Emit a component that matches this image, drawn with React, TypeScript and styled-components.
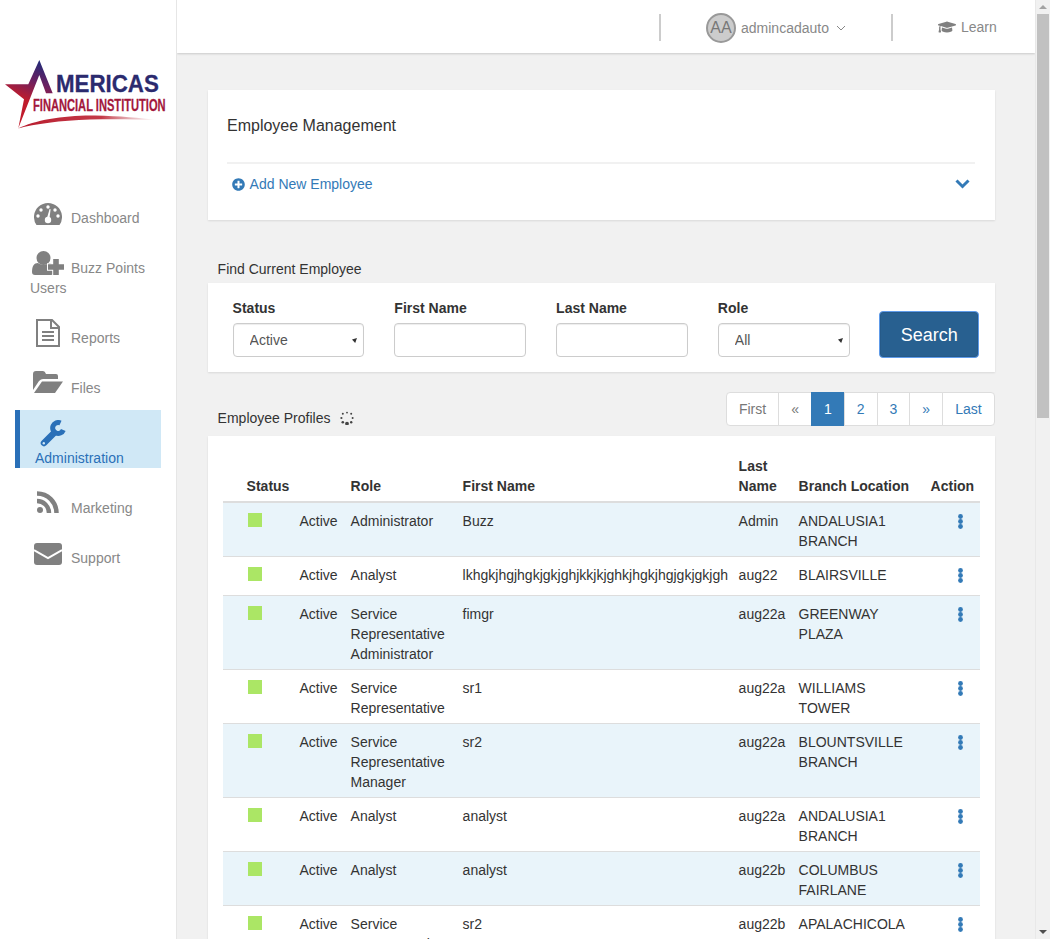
import React from 'react';
import styled, { createGlobalStyle } from 'styled-components';
import { FaGraduationCap, FaPlusCircle } from 'react-icons/fa';

const GlobalStyle = createGlobalStyle`
    html, body {
        margin: 0;
        height: 100%;
        overflow: hidden;
        background: #f1f1f1;
        color: #333;
        font-family: "Liberation Sans", Arial, sans-serif;
        font-size: 14px;
        line-height: 20px;
    }
    * { box-sizing: border-box; }
`;

const Shell = styled.div`
    display: flex;
    height: 100vh;
    overflow: hidden;
`;

const Sidebar = styled.aside`
    flex: 0 0 177px;
    background: #fff;
    border-right: 1px solid #e6e6e6;
    padding-top: 60px;
`;

const LogoBox = styled.div`
    height: 138px;
    padding-left: 5px;
`;

const Nav = styled.nav`
    width: 146px;
    margin-left: 15px;
`;

const NavItem = styled.a<{ $active?: boolean }>`
    display: block;
    padding: ${(p) => (p.$active ? '10px 0 0 15px' : '10px 0 10px 15px')};
    margin: ${(p) => (p.$active ? '-8px 0 20px' : '0 0 10px')};
    background: ${(p) => (p.$active ? '#d0e8f6' : 'transparent')};
    border-left: ${(p) => (p.$active ? '5px solid #2a70b8' : 'none')};
    color: ${(p) => (p.$active ? '#2a70b8' : '#888')};
`;

const IconSlot = styled.span<{ $left: number; $top: number; $stacked?: boolean }>`
    display: ${(p) => (p.$stacked ? 'block' : 'inline-block')};
    width: ${(p) => (p.$stacked ? 'auto' : '41px')};
    height: ${(p) => (p.$stacked ? '28px' : '20px')};
    vertical-align: top;
    & > svg {
        display: block;
        margin-left: ${(p) => p.$left}px;
        margin-top: ${(p) => p.$top}px;
    }
`;

const Main = styled.div`
    flex: 1;
    min-width: 0;
    display: flex;
    flex-direction: column;
    overflow: hidden;
`;

const Header = styled.header`
    flex: 0 0 53px;
    background: #fff;
    box-shadow: 0 1px 2px rgba(0, 0, 0, 0.16);
    display: flex;
    justify-content: flex-end;
    align-items: flex-start;
    color: #888;
`;

const HeaderDivider = styled.span`
    width: 2px;
    height: 27px;
    margin-top: 14px;
    background: #ccc;
`;

const UserBlock = styled.div`
    width: 230px;
    height: 53px;
    padding: 3px 0 0 45px;
    display: flex;
    align-items: center;
`;

const Avatar = styled.span`
    width: 30px;
    height: 30px;
    border-radius: 50%;
    background: #ccc;
    border: 2px solid #999;
    display: flex;
    align-items: center;
    justify-content: center;
    font-size: 16px;
    color: #777;
    margin-right: 5px;
`;

const CaretIcon = styled.svg`
    margin-left: 7px;
`;

const LearnBlock = styled.div`
    width: 142px;
    height: 53px;
    padding: 1px 0 0 45px;
    display: flex;
    align-items: center;
    gap: 5px;
`;

const Content = styled.main`
    flex: 1;
    padding: 37px 40px 0 31px;
`;

const Card = styled.section`
    background: #fff;
    box-shadow: 0 1px 2px rgba(0, 0, 0, 0.1);
`;

const ManageCard = styled(Card)`
    padding: 25px 20px 0 19px;
    height: 130px;
    margin-bottom: 39px;
`;

const CardTitle = styled.h2`
    margin: 0 0 25px;
    font-size: 16px;
    font-weight: 400;
    line-height: 22px;
`;

const AddRow = styled.div`
    border-top: 2px solid #f1f1f1;
    height: 42px;
    padding: 0 5px;
    display: flex;
    align-items: center;
    justify-content: space-between;
    color: #337ab7;
`;

const AddLink = styled.a`
    display: flex;
    align-items: center;
    gap: 4.6px;
`;

const SectionTitle = styled.div`
    padding-left: 9.6px;
    line-height: 20px;
`;

const SearchCard = styled(Card)`
    margin-top: 4px;
    padding: 15px 16px 15px 24.6px;
    display: flex;
    align-items: flex-start;
    gap: 30px;
`;

const Field = styled.label`
    display: block;
    flex: 0 0 131.75px;
`;

const FieldLabel = styled.div`
    font-weight: 700;
    margin-bottom: 5px;
`;

const controlStyles = `
    display: block;
    width: 100%;
    height: 34px;
    background-color: #fff;
    border: 1px solid #ccc;
    border-radius: 4px;
    box-shadow: inset 0 1px 1px rgba(0, 0, 0, 0.075);
    color: #555;
    font: 14px "Liberation Sans", Arial, sans-serif;
`;

const TextInput = styled.input`
    ${controlStyles}
    padding: 6px 12px;
`;

const selectArrow =
    "url(\"data:image/svg+xml,%3Csvg xmlns='http://www.w3.org/2000/svg' width='5' height='5'%3E%3Cpath d='M0 1.4 L5 0 L3.2 5 Z' fill='%23333'/%3E%3C/svg%3E\")";

const Select = styled.select`
    ${controlStyles}
    appearance: none;
    padding: 6px 16px;
    background-image: ${selectArrow};
    background-repeat: no-repeat;
    background-position: right 6px center;
`;

const SearchButton = styled.button`
    flex: 0 0 100px;
    height: 47px;
    margin: 13px 0 -1px -0.4px;
    padding: 2px 0 0;
    background: #286090;
    border: 1px solid #5e9bea;
    border-radius: 4px;
    box-shadow: inset 0 0 0 1px #265a88;
    color: #fff;
    font: 18px "Liberation Sans", Arial, sans-serif;
`;

const ProfilesBar = styled.div`
    display: flex;
    justify-content: space-between;
    align-items: flex-end;
    margin: 20px 0 10px;
`;

const ProfilesTitle = styled.div`
    display: flex;
    align-items: center;
    gap: 10px;
    padding-left: 9.6px;
    margin-bottom: -2px;
`;

const Pager = styled.ul`
    display: flex;
    list-style: none;
    margin: 0 0.4px 0 0;
    padding: 0;
`;

const PageLink = styled.li<{ $state?: 'active' | 'disabled' }>`
    padding: 6px 12px;
    margin-left: -1px;
    border: 1px solid ${(p) => (p.$state === 'active' ? '#337ab7' : '#ddd')};
    background: ${(p) => (p.$state === 'active' ? '#337ab7' : '#fff')};
    color: ${(p) => (p.$state === 'active' ? '#fff' : p.$state === 'disabled' ? '#777' : '#337ab7')};
    &:first-child {
        border-radius: 4px 0 0 4px;
    }
    &:last-child {
        border-radius: 0 4px 4px 0;
    }
`;

const TableCard = styled(Card)`
    padding: 20px 15px 0;
`;

const Table = styled.table`
    width: 757px;
    table-layout: fixed;
    border-collapse: separate;
    border-spacing: 0;
`;

const Th = styled.th`
    padding: 0 5.4px 5px 4.6px;
    text-align: left;
    vertical-align: bottom;
    font-weight: 700;
    border-bottom: 2px solid #ddd;
    &:first-child {
        padding-left: 23.6px;
    }
`;

const Tr = styled.tr<{ $shaded: boolean }>`
    background: ${(p) => (p.$shaded ? '#e9f4fa' : '#fff')};
`;

const Td = styled.td`
    padding: 8px 5.4px 5px 4.6px;
    height: 39px;
    vertical-align: top;
    border-bottom: 1px solid #ddd;
`;

const StatusCell = styled.div`
    display: flex;
    justify-content: space-between;
    padding: 0 3px 0 20.4px;
`;

const StatusDot = styled.span`
    width: 14px;
    height: 14px;
    margin-top: 2px;
    background: #abe665;
`;

const ActionCell = styled.div`
    display: flex;
    justify-content: center;
    padding: 3px 0 0 15px;
`;

const Track = styled.div`
    flex: 0 0 15px;
    background: #f1f1f1;
    border-left: 1px solid #e8e8e8;
    display: flex;
    flex-direction: column;
    align-items: center;
`;

const Arrow = styled.span<{ $dir: 'up' | 'down' }>`
    flex: 0 0 auto;
    margin: ${(p) => (p.$dir === 'up' ? '5px 0 5px' : 'auto 0 5px')};
    border-left: 4px solid transparent;
    border-right: 4px solid transparent;
    ${(p) => (p.$dir === 'up' ? 'border-bottom: 4px solid #a3a3a3;' : 'border-top: 4px solid #505050;')}
`;

const Thumb = styled.div`
    width: 12px;
    height: 404px;
    background: #c1c1c1;
`;

const rows = [
    ['Administrator', 'Buzz', 'Admin', 'ANDALUSIA1 BRANCH'],
    ['Analyst', 'lkhgkjhgjhgkjgkjghjkkjkjghkjhgkjhgjgkjgkjgh', 'aug22', 'BLAIRSVILLE'],
    ['Service Representative Administrator', 'fimgr', 'aug22a', 'GREENWAY PLAZA'],
    ['Service Representative', 'sr1', 'aug22a', 'WILLIAMS TOWER'],
    ['Service Representative Manager', 'sr2', 'aug22a', 'BLOUNTSVILLE BRANCH'],
    ['Analyst', 'analyst', 'aug22a', 'ANDALUSIA1 BRANCH'],
    ['Analyst', 'analyst', 'aug22b', 'COLUMBUS FAIRLANE'],
    ['Service Representative', 'sr2', 'aug22b', 'APALACHICOLA'],
];

const columnWidths = [123, 112, 276, 60, 132, 54];
const iconGrey = '#808080';
const logoFont = 'Liberation Sans, Arial, sans-serif';

function Logo() {
    return (
        <svg width="166" height="76" viewBox="0 0 166 76">
            <defs>
                <linearGradient id="starFill" gradientUnits="userSpaceOnUse" x1="36" y1="2" x2="20" y2="40">
                    <stop offset="0" stopColor="#232a78" />
                    <stop offset="0.5" stopColor="#6d2060" />
                    <stop offset="1" stopColor="#c01c2c" />
                </linearGradient>
                <linearGradient id="swooshFill" x1="0" y1="0" x2="1" y2="0">
                    <stop offset="0" stopColor="#b81c2e" />
                    <stop offset="0.6" stopColor="#c43a48" />
                    <stop offset="1" stopColor="#d08088" stopOpacity="0" />
                </linearGradient>
            </defs>
            <path
                d="M0 24.3 H23.3 L34.3 0 L47.7 33.3 H41 L34.3 15 L25.7 36.7 L13.3 68.3 L19 39.3 Z"
                fill="url(#starFill)"
            />
            <path
                d="M13 68.5 C30 60 60 55 90 55.5 C115 56 135 58 152 60 C125 59 105 59 85 59.5 C55 60.5 30 64 13 68.5 Z"
                fill="url(#swooshFill)"
            />
            <text
                transform="translate(51 32) scale(0.93 1)"
                fill="#2b2a6e"
                stroke="#2b2a6e"
                strokeWidth="0.3"
                fontFamily={logoFont}
                fontSize="24"
                fontWeight="700"
            >
                MERICAS
            </text>
            <text
                transform="translate(28 51) scale(0.696 1)"
                fill="#a3183c"
                stroke="#a3183c"
                strokeWidth="0.25"
                fontFamily={logoFont}
                fontSize="16"
                fontWeight="700"
            >
                FINANCIAL INSTITUTION
            </text>
        </svg>
    );
}

function GaugeIcon() {
    return (
        <svg width="28" height="22" viewBox="0 0 28 22" fill={iconGrey}>
            <path d="M2.5 22 A14 14 0 1 1 25.5 22 Z" />
            <g fill="#fff">
                <circle cx="14" cy="4" r="1.7" />
                <circle cx="7" cy="7" r="1.7" />
                <circle cx="21" cy="7" r="1.7" />
                <circle cx="4" cy="13" r="1.7" />
                <circle cx="24" cy="13" r="1.7" />
                <circle cx="14" cy="17" r="3.2" />
                <path d="M13 15 L15.6 6 L16.6 6.3 L15.4 16 Z" />
            </g>
        </svg>
    );
}

function UserPlusIcon() {
    return (
        <svg width="32" height="24" viewBox="0 0 32 24" fill={iconGrey}>
            <circle cx="11.5" cy="7" r="7" />
            <path d="M0 21 C0 15 2 12 6 12 C9 14 14 14 17 12 C20 12 22 15 22 21 C22 23 21 24 19 24 H3 C1 24 0 23 0 21 Z" />
            <path
                d="M21.2 8 H26.8 V13.2 H32 V18.8 H26.8 V24 H21.2 V18.8 H16 V13.2 H21.2 Z"
                stroke="#fff"
                strokeWidth="2"
                paintOrder="stroke"
            />
        </svg>
    );
}

function FileIcon() {
    return (
        <svg width="24" height="28" viewBox="0 0 24 28" fill="none" stroke={iconGrey} strokeWidth="2">
            <path d="M1 1 H16 L23 8 V27 H1 Z" />
            <path d="M15 1 V9 H23" />
            <path d="M6 13 H18 M6 17 H18 M6 21 H18" />
        </svg>
    );
}

function FolderIcon() {
    return (
        <svg width="30" height="22" viewBox="0 0 30 22" fill={iconGrey}>
            <path d="M0 3 Q0 0 3 0 H10 Q12 0 13 3 H23 Q25 3 25 5 V8 H10 Q8 8 6 10 L0 19 Z" />
            <path d="M9 10.5 H30 L22 22 H1 Z" />
        </svg>
    );
}

function WrenchIcon() {
    return (
        <svg width="26" height="27" viewBox="0 0 26 27" fill="none" stroke="#2a70b8">
            <path d="M20.5 3 A5.5 5.5 0 1 0 23.3 10" strokeWidth="5" />
            <path d="M14 13 L4 23" strokeWidth="6.5" strokeLinecap="round" />
            <circle cx="3.8" cy="23.2" r="1.2" fill="#d0e8f6" stroke="none" />
        </svg>
    );
}

function RssIcon() {
    return (
        <svg width="22" height="22" viewBox="0 0 22 22" fill="none" stroke={iconGrey} strokeWidth="4.5">
            <path d="M0 2.5 A19.5 19.5 0 0 1 19.5 22" />
            <path d="M0 10 A12 12 0 0 1 12 22" />
            <circle cx="3" cy="19" r="3" fill={iconGrey} stroke="none" />
        </svg>
    );
}

function EnvelopeIcon() {
    return (
        <svg width="28" height="22" viewBox="0 0 28 22">
            <rect width="28" height="22" rx="3" fill={iconGrey} />
            <path d="M0 7 L14 15 L28 7" fill="none" stroke="#fff" strokeWidth="2" />
        </svg>
    );
}

function DotsIcon() {
    return (
        <svg width="5" height="15" viewBox="0 0 5 15" fill="#337ab7">
            <circle cx="2.5" cy="2.5" r="2.4" />
            <circle cx="2.5" cy="7.5" r="2.4" />
            <circle cx="2.5" cy="12.5" r="2.4" />
        </svg>
    );
}

function ChevronIcon() {
    return (
        <svg width="15" height="10" viewBox="0 0 15 10" fill="none" stroke="#337ab7" strokeWidth="3">
            <path d="M1.5 1.5 L7.5 7.5 L13.5 1.5" />
        </svg>
    );
}

function Spinner() {
    const dots = [
        [7, 1.6, 0.9],
        [11.2, 2.8, 1],
        [12.6, 7, 1],
        [11.2, 11.2, 1.2],
        [7, 12.6, 1.9],
        [2.8, 11.2, 1.3],
        [1.4, 7, 1.1],
        [2.8, 2.8, 1],
    ];
    return (
        <svg width="14" height="14" viewBox="0 0 14 14" fill="#444">
            {dots.map(([x, y, r]) => (
                <circle key={`${x}-${y}`} cx={x} cy={y} r={r} />
            ))}
        </svg>
    );
}

function App() {
    return (
        <Shell>
            <GlobalStyle />
            <Sidebar>
                <LogoBox>
                    <Logo />
                </LogoBox>
                <Nav>
                    <NavItem>
                        <IconSlot $left={4} $top={-5}>
                            <GaugeIcon />
                        </IconSlot>
                        Dashboard
                    </NavItem>
                    <NavItem>
                        <IconSlot $left={2} $top={-7}>
                            <UserPlusIcon />
                        </IconSlot>
                        Buzz Points Users
                    </NavItem>
                    <NavItem>
                        <IconSlot $left={6} $top={-9}>
                            <FileIcon />
                        </IconSlot>
                        Reports
                    </NavItem>
                    <NavItem>
                        <IconSlot $left={3} $top={-7}>
                            <FolderIcon />
                        </IconSlot>
                        Files
                    </NavItem>
                    <NavItem $active>
                        <IconSlot $left={5} $top={0} $stacked>
                            <WrenchIcon />
                        </IconSlot>
                        Administration
                    </NavItem>
                    <NavItem>
                        <IconSlot $left={7} $top={-7}>
                            <RssIcon />
                        </IconSlot>
                        Marketing
                    </NavItem>
                    <NavItem>
                        <IconSlot $left={4} $top={-5}>
                            <EnvelopeIcon />
                        </IconSlot>
                        Support
                    </NavItem>
                </Nav>
            </Sidebar>
            <Main>
                <Header>
                    <HeaderDivider />
                    <UserBlock>
                        <Avatar>AA</Avatar>
                        admincadauto
                        <CaretIcon width="10" height="6" viewBox="0 0 10 6" fill="none" stroke="#888" strokeWidth="1">
                            <path d="M1 1 L5 5 L9 1" />
                        </CaretIcon>
                    </UserBlock>
                    <HeaderDivider />
                    <LearnBlock>
                        <FaGraduationCap size={18} color={iconGrey} />
                        Learn
                    </LearnBlock>
                </Header>
                <Content>
                    <ManageCard>
                        <CardTitle>Employee Management</CardTitle>
                        <AddRow>
                            <AddLink>
                                <FaPlusCircle size={13} />
                                Add New Employee
                            </AddLink>
                            <ChevronIcon />
                        </AddRow>
                    </ManageCard>
                    <SectionTitle>Find Current Employee</SectionTitle>
                    <SearchCard>
                        <Field>
                            <FieldLabel>Status</FieldLabel>
                            <Select defaultValue="Active">
                                <option>Active</option>
                                <option>Inactive</option>
                            </Select>
                        </Field>
                        <Field>
                            <FieldLabel>First Name</FieldLabel>
                            <TextInput />
                        </Field>
                        <Field>
                            <FieldLabel>Last Name</FieldLabel>
                            <TextInput />
                        </Field>
                        <Field>
                            <FieldLabel>Role</FieldLabel>
                            <Select defaultValue="All">
                                <option>All</option>
                                <option>Analyst</option>
                            </Select>
                        </Field>
                        <SearchButton>Search</SearchButton>
                    </SearchCard>
                    <ProfilesBar>
                        <ProfilesTitle>
                            Employee Profiles
                            <Spinner />
                        </ProfilesTitle>
                        <Pager>
                            <PageLink $state="disabled">First</PageLink>
                            <PageLink $state="disabled">«</PageLink>
                            <PageLink $state="active">1</PageLink>
                            <PageLink>2</PageLink>
                            <PageLink>3</PageLink>
                            <PageLink>»</PageLink>
                            <PageLink>Last</PageLink>
                        </Pager>
                    </ProfilesBar>
                    <TableCard>
                        <Table>
                            <colgroup>
                                {columnWidths.map((w, i) => (
                                    <col key={i} width={w} />
                                ))}
                            </colgroup>
                            <thead>
                                <tr>
                                    <Th>Status</Th>
                                    <Th>Role</Th>
                                    <Th>First Name</Th>
                                    <Th>Last Name</Th>
                                    <Th>Branch Location</Th>
                                    <Th>Action</Th>
                                </tr>
                            </thead>
                            <tbody>
                                {rows.map(([role, first, last, branch], i) => (
                                    <Tr key={i} $shaded={i % 2 === 0}>
                                        <Td>
                                            <StatusCell>
                                                <StatusDot />
                                                Active
                                            </StatusCell>
                                        </Td>
                                        <Td>{role}</Td>
                                        <Td>{first}</Td>
                                        <Td>{last}</Td>
                                        <Td>{branch}</Td>
                                        <Td>
                                            <ActionCell>
                                                <DotsIcon />
                                            </ActionCell>
                                        </Td>
                                    </Tr>
                                ))}
                            </tbody>
                        </Table>
                    </TableCard>
                </Content>
            </Main>
            <Track>
                <Arrow $dir="up" />
                <Thumb />
                <Arrow $dir="down" />
            </Track>
        </Shell>
    );
}

export default App;
